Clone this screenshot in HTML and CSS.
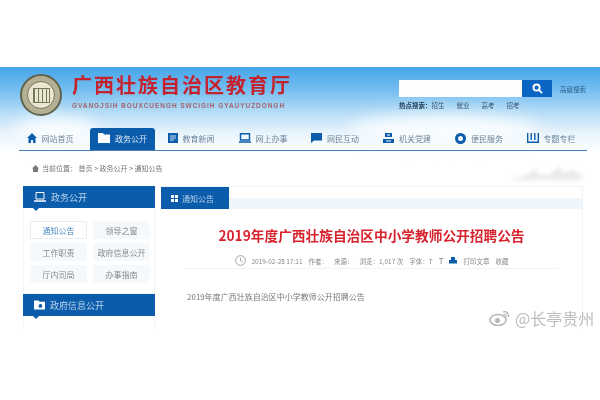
FILE: index.html
```html
<!DOCTYPE html>
<html lang="zh">
<head>
	<meta charset="utf-8">
	<title>广西壮族自治区教育厅</title>
	<link rel="stylesheet" href="styles.css">
</head>
<body>

<div class="page">
	<div class="sky">
		<div class="cloud cloud-left"></div>
		<div class="cloud cloud-right"></div>

		<div class="top">
			<div class="seal"><div class="seal-inner"><div class="seal-core"></div></div></div>
			<div class="brand">
				<div class="brand-name">广西壮族自治区教育厅</div>
				<div class="brand-pinyin">GVANGJSIH BOUXCUENGH SWCIGIH GYAUYUZDONGH</div>
			</div>
			<div class="search">
				<div class="search-row">
					<div class="search-input"></div>
					<div class="search-btn">
						<svg class="search-icon" width="11" height="11" viewBox="0 0 12 12"><circle cx="5" cy="5" r="3.400" fill="none" stroke="#fff" stroke-width="2"/><path d="M7.500 7.500L11 11" stroke="#fff" stroke-width="2"/></svg>
					</div>
					<div class="search-adv">高级搜索</div>
				</div>
				<div class="hot"><b>热点搜索：</b><span>招生</span><span>就业</span><span>高考</span><span>招考</span></div>
			</div>
		</div>

		<div class="nav">
			<div class="nav-item nav-home">
				<svg width="10" height="10" viewBox="0 0 10 10"><path d="M5 0L10 5H8.500V10H6V7H4V10H1.500V5H0z" fill="#0b5cab"/></svg>
				网站首页
			</div>
			<div class="nav-item active">
				<svg width="12" height="10" viewBox="0 0 12 10"><path d="M0 0H5L6 1.500H12V10H0z" fill="#fff"/></svg>
				政务公开
			</div>
			<div class="nav-item">
				<svg width="10" height="10" viewBox="0 0 10 10"><path d="M0 0H10V10H0z" fill="#0b5cab"/><path d="M2 3H8M2 5H8M2 7H6" stroke="#cfe3f5"/></svg>
				教育新闻
			</div>
			<div class="nav-item">
				<svg width="12" height="10" viewBox="0 0 12 10"><path d="M1.500 .7H10.500V7H1.500z" fill="none" stroke="#0b5cab" stroke-width="1.400"/><path d="M0 9H12" stroke="#0b5cab" stroke-width="1.500"/></svg>
				网上办事
			</div>
			<div class="nav-item">
				<svg width="11" height="10" viewBox="0 0 11 10"><path d="M0 0H11V7.500H3L0 10z" fill="#0b5cab"/></svg>
				网民互动
			</div>
			<div class="nav-item">
				<svg width="11" height="10" viewBox="0 0 11 10"><path d="M2 0H9V4H2zM0 6H11V10H0z" fill="#0b5cab"/><path d="M4 2H7M3 8H8" stroke="#fff"/></svg>
				机关党建
			</div>
			<div class="nav-item">
				<svg width="11" height="11" viewBox="0 0 11 11"><circle cx="5.500" cy="5.500" r="4" fill="none" stroke="#0b5cab" stroke-width="3"/></svg>
				便民服务
			</div>
			<div class="nav-item">
				<svg width="12" height="10" viewBox="0 0 12 10"><path d="M.7 0V9.300H11.300V0M4.200 0V7M7.800 0V7" fill="none" stroke="#0b5cab" stroke-width="1.400"/></svg>
				专题专栏
			</div>
		</div>
	</div>

	<div class="crumb">
		<svg width="7" height="7" viewBox="0 0 10 10"><path d="M5 0L10 5H8.500V10H1.500V5H0z" fill="#777"/></svg>
		当前位置： 首页 &gt; 政务公开 &gt; 通知公告
	</div>
	<svg class="hills" width="70" height="18" viewBox="0 0 70 18"><path d="M0 14L14 12L22 5L28 11L38 11L46 2L52 9L62 6L70 12V16H0z" fill="#e8eaeb"/></svg>

	<div class="main">
		<div class="side">
			<div class="side-head">
				<svg width="12" height="10" viewBox="0 0 12 10"><path d="M2 .5H10V7H2z" fill="none" stroke="#fff"/><path d="M0 9H12" stroke="#fff" stroke-width="1.500"/></svg>
				政务公开
			</div>
			<div class="side-list">
				<div class="side-link current">通知公告</div>
				<div class="side-link">领导之窗</div>
				<div class="side-link">工作职责</div>
				<div class="side-link">政府信息公开</div>
				<div class="side-link">厅内司局</div>
				<div class="side-link">办事指南</div>
			</div>
			<div class="side-head">
				<svg width="11" height="10" viewBox="0 0 12 10"><path d="M0 0H5L6 1.500H12V10H0z" fill="#fff"/><circle cx="7" cy="6" r="2" fill="#0b5cab"/></svg>
				政府信息公开
			</div>
			<div class="side-list"></div>
		</div>

		<div class="article">
			<div class="article-head">
				<div class="article-tab">
					<svg width="7" height="7" viewBox="0 0 7 7"><path d="M0 0H3V3H0zM4 0H7V3H4zM0 4H3V7H0zM4 4H7V7H4z" fill="#fff"/></svg>
					通知公告
				</div>
			</div>
			<h1 class="article-title">2019年度广西壮族自治区中小学教师公开招聘公告</h1>
			<div class="meta">
				<svg width="11" height="11" viewBox="0 0 10 10"><circle cx="5" cy="5" r="4.400" fill="none" stroke="#999" stroke-width=".8"/><path d="M5 2.500V5L7 6.500" fill="none" stroke="#999" stroke-width=".8"/></svg>
				<span>2019-02-28 17:11</span>
				<span>作者：</span>
				<span>来源：</span>
				<span>浏览：1,017 次</span>
				<span>字体：T</span>
				<span class="meta-t">T</span>
				<svg width="8" height="8" viewBox="0 0 8 8"><path d="M2 0H6V3H8V6.500H0V3H2z" fill="#0b5cab"/></svg>
				<span>打印文章</span>
				<span>收藏</span>
			</div>
			<p class="article-text">2019年度广西壮族自治区中小学教师公开招聘公告</p>
		</div>
	</div>

	<div class="mark">
		<svg width="22" height="16" viewBox="0 0 22 16"><ellipse cx="9" cy="10" rx="8" ry="5.500" fill="none" stroke="#b5b5b5" stroke-width="1.600"/><circle cx="8.500" cy="10.500" r="2.500" fill="#b5b5b5"/><path d="M14 2C17 1 20 3 19.500 7M14.500 4.500C16 4 17.500 5 17.200 6.800" fill="none" stroke="#b5b5b5" stroke-width="1.300"/></svg>
		<span>@长亭贵州</span>
	</div>
</div>

</body>
</html>
```

FILE: styles.css
```css
body {
	margin: 0;
	background-color: #fff;
	font-family: "Noto Sans CJK SC", "Liberation Sans", sans-serif;
	color: #555;
}

.page {
	position: relative;
	margin-top: 67px;
	height: 263px;
	overflow: hidden;
	filter: blur(0.6px);
}

.sky {
	position: relative;
	height: 83px;
	background: linear-gradient(#46a5ea 0, #72bdf0 22px, #b5dcf6 45px, #e6f3fc 65px, #fbfdff 83px);
}

.cloud {
	position: absolute;
	border-radius: 50%;
	background-color: #f8fcff;
	filter: blur(8px);
}
.cloud-left {
	left: 14px;
	top: 50px;
	width: 85px;
	height: 30px;
}
.cloud-right {
	left: 350px;
	top: 48px;
	width: 190px;
	height: 30px;
}

.top {
	position: relative;
	display: flex;
	height: 61px;
	padding: 7px 0 0 20px;
	box-sizing: border-box;
}

.seal {
	width: 42px;
	height: 42px;
	border-radius: 50%;
	background-color: #b5b095;
	border: 2px solid #5f6349;
	box-sizing: border-box;
	display: flex;
	align-items: center;
	justify-content: center;
}
.seal-inner {
	width: 28px;
	height: 28px;
	border-radius: 50%;
	background-color: #e9e6d2;
	border: 1px solid #77775c;
	box-sizing: border-box;
	display: flex;
	align-items: center;
	justify-content: center;
}
.seal-core {
	width: 17px;
	height: 15px;
	border: 1px solid #77775c;
	box-sizing: border-box;
	background: repeating-linear-gradient(90deg, #77775c 0, #77775c 1px, #e9e6d2 1px, #e9e6d2 4px);
}

.brand {
	margin-left: 10px;
	margin-top: -2px;
	width: 327px;
}
.brand-name {
	font-size: 20px;
	font-weight: bold;
	line-height: 26px;
	letter-spacing: 2px;
	color: #c6222d;
}
.brand-pinyin {
	margin-top: 3px;
	font-family: "Liberation Sans", sans-serif;
	font-size: 6.500px;
	font-weight: bold;
	line-height: 9px;
	letter-spacing: 0.95px;
	color: #a5636c;
	white-space: nowrap;
}

.search-row {
	display: flex;
	align-items: center;
	margin-top: 6px;
}
.search-input {
	width: 123px;
	height: 17px;
	background-color: #fdfdfb;
}
.search-btn {
	width: 30px;
	height: 17px;
	background-color: #0a66c2;
	display: flex;
	align-items: center;
	justify-content: center;
}
.search-adv {
	margin-left: 8px;
	font-size: 6.500px;
	color: #2c5f8e;
}
.hot {
	display: flex;
	margin-top: 2px;
	font-size: 6.500px;
	line-height: 12px;
	color: #3a5570;
}
.hot b {
	color: #27405a;
}
.hot span {
	margin-right: 12px;
}

.nav {
	position: relative;
	display: flex;
	height: 22px;
	margin: 0 13px 0 19px;
	border-bottom: 1.500px solid #4a80bb;
}
.nav-item {
	display: flex;
	align-items: center;
	justify-content: center;
	gap: 5px;
	width: 72px;
	padding-bottom: 2px;
	font-size: 8px;
	color: #6d8499;
	white-space: nowrap;
	box-sizing: border-box;
}
.nav-home {
	width: 71px;
	padding-right: 9px;
}
.nav-item.active {
	width: 65px;
	background-color: #0b5cab;
	border-radius: 3px 3px 0 0;
	color: #dce9f5;
}

.crumb {
	display: flex;
	align-items: center;
	gap: 3px;
	height: 36px;
	padding-left: 32px;
	font-size: 7px;
	color: #777;
}

.hills {
	position: absolute;
	left: 512px;
	top: 97px;
	filter: blur(2px);
}

.main {
	display: flex;
	padding-left: 23px;
	gap: 6px;
}

.side {
	width: 132px;
}
.side-head {
	position: relative;
	display: flex;
	align-items: center;
	gap: 5px;
	height: 22px;
	padding-left: 11px;
	background-color: #0b5cab;
	font-size: 9px;
	color: #b9d3ec;
}
.side-head::after {
	content: "";
	position: absolute;
	left: 10px;
	top: 22px;
	border: 3px solid transparent;
	border-top-color: #0b5cab;
}
.side-list {
	display: grid;
	grid-template-columns: 1fr 1fr;
	grid-auto-rows: 18px;
	gap: 4px 6px;
	height: 72px;
	padding: 13px 4px 0 6px;
	border: 1px solid #f2f5f8;
	border-top: 0;
}
.side-link {
	display: flex;
	align-items: center;
	justify-content: center;
	background-color: #f5f9fc;
	font-size: 8px;
	color: #888;
	white-space: nowrap;
}
.side-link.current {
	background-color: #fff;
	border: 1px solid #e6edf3;
	color: #4a88c2;
}

.article {
	width: 422px;
	height: 150px;
	border: 1px solid #f1f4f7;
	border-left: 0;
	box-sizing: border-box;
}
.article-head {
	height: 22px;
	background: linear-gradient(#fff 0, #fff 11px, #eef6fc 11px);
}
.article-tab {
	display: flex;
	align-items: center;
	gap: 4px;
	width: 68px;
	height: 22px;
	padding-left: 10px;
	box-sizing: border-box;
	background-color: #0b5cab;
	font-size: 8px;
	color: #b9d3ec;
}
.article-title {
	margin: 16px 0 0;
	font-size: 13.700px;
	line-height: 20px;
	font-weight: bold;
	text-align: center;
	color: #d8232e;
}
.meta {
	display: flex;
	align-items: center;
	justify-content: center;
	gap: 6px;
	height: 11px;
	margin: 10px 24px 0;
	padding-bottom: 2px;
	border-bottom: 1px solid #f3f3f3;
	font-size: 6.500px;
	color: #888;
	white-space: nowrap;
}
.meta-t {
	font-size: 8px;
}
.article-text {
	margin: 22px 0 0 26px;
	font-size: 8px;
	line-height: 12px;
	color: #777;
}

.mark {
	position: absolute;
	left: 489px;
	top: 241px;
	display: flex;
	align-items: center;
	gap: 4px;
	font-size: 16px;
	line-height: 20px;
	color: #bcbcbc;
	white-space: nowrap;
}
```
